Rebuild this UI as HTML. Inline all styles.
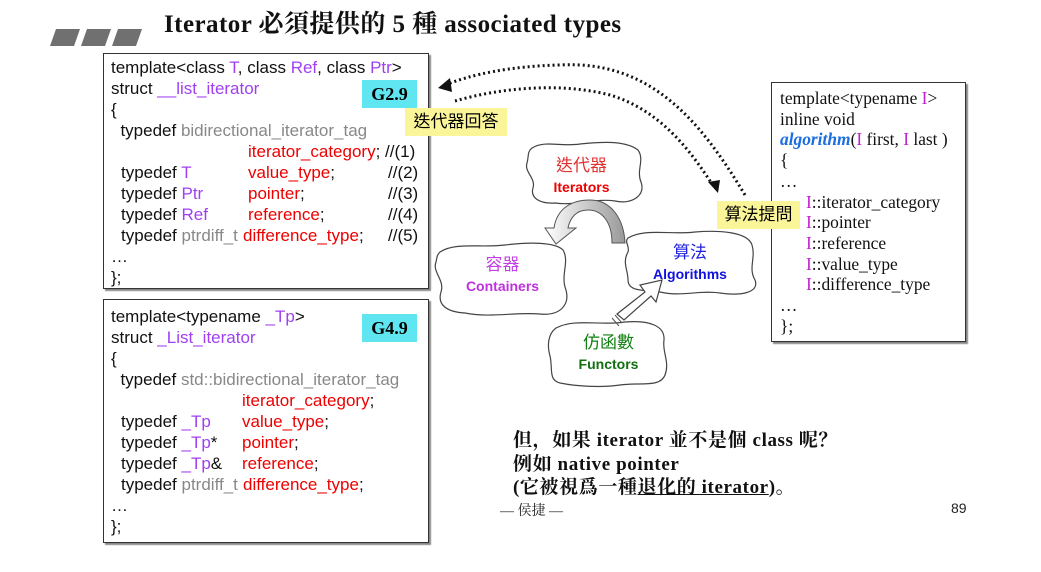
<!DOCTYPE html>
<html><head><meta charset="utf-8"><style>
body{margin:0;width:1041px;height:572px;background:#fff;position:relative;overflow:hidden;font-family:"Liberation Sans","Noto Sans CJK TC",sans-serif;}
.a{position:absolute;white-space:pre;}
.box{position:absolute;border:1px solid #333;box-shadow:2px 2px 1px #888;background:#fff;}
.code{position:absolute;font-size:17px;color:#111;line-height:21px;white-space:normal;}
.code div{position:relative;height:21px;white-space:pre;}
.code span.c{position:absolute;top:0;}
.p{color:#a040f0}.r{color:#e00}.g{color:#888}
.tag{position:absolute;background:#5fe6f0;font-family:"Liberation Serif",serif;font-weight:bold;font-size:18px;text-align:center;line-height:28px;}
.y{position:absolute;background:#fbf59a;font-family:"Liberation Sans","Noto Sans CJK TC",sans-serif;font-size:17px;line-height:28px;text-align:center;}
.srf{font-family:"Liberation Serif","Noto Serif CJK SC",serif;font-size:17.4px;line-height:20.7px;color:#111}
.m{color:#c020d0}
</style></head><body>
<div class="a" style="left:50px;top:11px;">
<svg width="92" height="18"><g fill="#707070"><polygon points="6,0 30,0 24,17 0,17"/><polygon points="37,0 61,0 55,17 31,17"/><polygon points="68,0 92,0 86,17 62,17"/></g></svg></div>
<div class="a" style="left:164px;top:4px;font-family:'Liberation Serif','Noto Serif CJK SC',serif;font-weight:bold;font-size:25px;letter-spacing:0.45px;color:#111;">Iterator 必須提供的 5 種 associated types</div>

<div class="box" style="left:103px;top:53px;width:324px;height:234px;"></div>
<div class="code" style="left:111px;top:57px;width:314px;"><div>template&lt;class <span class="p">T</span>, class <span class="p">Ref</span>, class <span class="p">Ptr</span>&gt;</div><div>struct <span class="p">__list_iterator</span></div><div>{</div><div>  typedef <span class="g">bidirectional_iterator_tag</span></div><div><span class="c" style="left:137px"><span class="r">iterator_category</span>; //(1)</span></div><div><span class="c" style="left:10px">typedef <span class="p">T</span></span><span class="c" style="left:137px"><span class="r">value_type</span>;</span><span class="c" style="left:277px">//(2)</span></div><div><span class="c" style="left:10px">typedef <span class="p">Ptr</span></span><span class="c" style="left:137px"><span class="r">pointer</span>;</span><span class="c" style="left:277px">//(3)</span></div><div><span class="c" style="left:10px">typedef <span class="p">Ref</span></span><span class="c" style="left:137px"><span class="r">reference</span>;</span><span class="c" style="left:277px">//(4)</span></div><div><span class="c" style="left:10px">typedef <span class="g">ptrdiff_t</span></span><span class="c" style="left:132px"><span class="r">difference_type</span>;</span><span class="c" style="left:277px">//(5)</span></div><div>…</div><div>};</div></div>
<div class="tag" style="left:362px;top:80px;width:55px;">G2.9</div>

<div class="box" style="left:103px;top:299px;width:324px;height:242px;"></div>
<div class="code" style="left:111px;top:306px;width:314px;"><div>template&lt;typename <span class="p">_Tp</span>&gt;</div><div>struct <span class="p">_List_iterator</span></div><div>{</div><div>  typedef <span class="g">std::bidirectional_iterator_tag</span></div><div><span class="c" style="left:131px"><span class="r">iterator_category</span>;</span></div><div><span class="c" style="left:10px">typedef <span class="p">_Tp</span></span><span class="c" style="left:131px"><span class="r">value_type</span>;</span></div><div><span class="c" style="left:10px">typedef <span class="p">_Tp</span>*</span><span class="c" style="left:131px"><span class="r">pointer</span>;</span></div><div><span class="c" style="left:10px">typedef <span class="p">_Tp</span>&amp;</span><span class="c" style="left:131px"><span class="r">reference</span>;</span></div><div><span class="c" style="left:10px">typedef <span class="g">ptrdiff_t</span></span><span class="c" style="left:132px"><span class="r">difference_type</span>;</span></div><div>…</div><div>};</div></div>
<div class="tag" style="left:362px;top:314px;width:55px;">G4.9</div>

<div class="box" style="left:771px;top:82px;width:193px;height:258px;"></div>
<div class="a srf" style="left:780px;top:88px;">template&lt;typename <span class="m">I</span>&gt;
inline void
<b><i style="color:#1a6ee0">algorithm</i></b>(<span class="m">I</span> first, <span class="m">I</span> last )
{
…</div>
<div class="a srf" style="left:806px;top:191.5px;"><span class="m">I</span>::iterator_category
<span class="m">I</span>::pointer
<span class="m">I</span>::reference
<span class="m">I</span>::value_type
<span class="m">I</span>::difference_type</div>
<div class="a srf" style="left:780px;top:295px;">…
};</div>

<svg class="a" style="left:0;top:0" width="1041" height="572">
<g fill="none" stroke="#111" stroke-width="3" stroke-dasharray="2 3">
<path d="M745,195 C700,120 650,60 560,65 C510,66 470,75 448,84"/>
<path d="M455,101 C500,88 560,82 610,95 C660,110 690,150 712,184"/>
</g>
<polygon points="438,88 450,78 452,92" fill="#111"/>
<polygon points="718,193 708,182 720,180" fill="#111"/>
<g fill="#fff" stroke="#444" stroke-width="1.2">
<path d="M532,148 C545,140 560,147 580,144 C600,142 625,140 638,150 C645,160 636,170 641,182 C646,195 632,205 615,201 C595,198 575,206 555,203 C540,204 530,198 533,188 C536,178 524,172 527,163 C529,156 527,152 532,148Z"/>
<path d="M440,252 C455,242 480,248 505,245 C530,242 555,242 563,250 C570,262 560,275 566,290 C570,305 560,316 540,314 C515,312 490,318 465,313 C447,312 437,305 441,292 C445,280 432,272 436,262 C437,257 437,255 440,252Z"/>
<path d="M628,238 C645,228 670,235 695,232 C720,230 748,232 752,245 C756,258 748,268 755,280 C760,293 740,296 720,293 C700,290 680,297 660,292 C645,290 628,292 628,280 C628,270 622,262 628,252 C630,246 624,242 628,238Z"/>
<path d="M556,328 C575,318 600,326 625,322 C650,320 665,326 664,340 C662,352 670,362 665,375 C660,388 640,382 620,385 C600,388 575,386 560,383 C548,380 553,368 550,356 C547,345 548,334 556,328Z"/>
</g>
<defs><linearGradient id="gg" x1="0" y1="0" x2="1" y2="0"><stop offset="0" stop-color="#fff"/><stop offset="1" stop-color="#999"/></linearGradient></defs>
<path d="M612,243 C612,222 602,210 588,210 C576,210 570,218 568,228 L576,228 L556,244 L545,228 L554,228 C557,208 572,200 590,200 C612,200 624,220 625,243 Z" fill="url(#gg)" stroke="#555" stroke-width="1"/>
<path d="M617,314 L645,292 L640,285 L662,280 L656,302 L651,296 L624,320Z" fill="#fff" stroke="#444" stroke-width="1.2"/>
<path d="M612,318 L619,326 M615,315 L622,323" stroke="#555" stroke-width="1"/>
</svg>
<div class="a" style="left:525px;top:155px;width:113px;text-align:center;line-height:21px;"><span style="color:#e03030;font-size:17px">迭代器</span><br><b style="color:#e00;font-size:14px">Iterators</b></div>
<div class="a" style="left:440px;top:254px;width:125px;text-align:center;line-height:21px;"><span style="color:#c040e0;font-size:17px">容器</span><br><b style="color:#c030e0;font-size:14px">Containers</b></div>
<div class="a" style="left:625px;top:242px;width:130px;text-align:center;line-height:21px;"><span style="color:#2020e0;font-size:17px">算法</span><br><b style="color:#1010e0;font-size:14px">Algorithms</b></div>
<div class="a" style="left:552px;top:332px;width:113px;text-align:center;line-height:21px;"><span style="color:#108010;font-size:17px">仿函數</span><br><b style="color:#107010;font-size:14px">Functors</b></div>

<div class="y" style="left:405px;top:108px;width:102px;">迭代器回答</div>
<div class="y" style="left:717px;top:201px;width:83px;">算法提問</div>

<div class="a" style="left:513px;top:429px;font-family:'Liberation Serif','Noto Serif CJK SC',serif;font-size:19px;letter-spacing:0.6px;font-weight:bold;line-height:23.5px;color:#111;">但，如果 iterator 並不是個 class 呢？
例如 native pointer
(它被視爲一種<u>退化的 iterator</u>)。</div>
<div class="a" style="left:500px;top:500px;font-family:'Liberation Serif','Noto Serif CJK SC',serif;font-size:14px;color:#222;">— 侯捷 —</div>
<div class="a" style="left:951px;top:500px;font-size:14px;color:#222;">89</div>
</body></html>
